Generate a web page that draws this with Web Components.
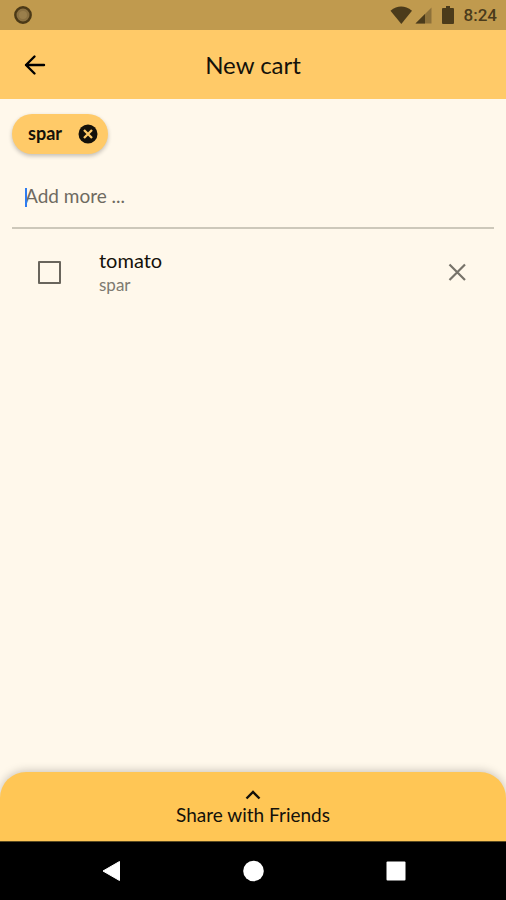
<!DOCTYPE html>
<html lang="en">
<head>
<meta charset="utf-8">
<meta name="viewport" content="width=device-width, initial-scale=1">
<title>New cart</title>
<style>
  body { margin: 0; background: #fff8eb; color: #14110a; font-family: Lato, "Open Sans", sans-serif; }
</style>
</head>
<body>
<cart-screen>
  <status-bar slot="top" time="8:24"></status-bar>
  <app-header slot="top">New cart</app-header>
  <store-chip>spar</store-chip>
  <add-field placeholder="Add more ..."></add-field>
  <cart-item name="tomato" store="spar"></cart-item>
  <share-sheet slot="bottom">Share with Friends</share-sheet>
  <nav-bar slot="bottom"></nav-bar>
</cart-screen>

<script>
function define(name, html) {
  const template = document.createElement('template');
  template.innerHTML = `<style>
    *, :host { box-sizing: border-box; }
    svg { display: block; }
    button { border: 0; padding: 0; margin: 0; background: none; color: inherit; font: inherit; cursor: pointer; }
  </style>` + html;
  customElements.define(name, class extends HTMLElement {
    constructor() {
      super();
      this.attachShadow({ mode: 'open' }).append(template.content.cloneNode(true));
    }
    connectedCallback() {
      this.shadowRoot.querySelectorAll('[data-text]').forEach(el => {
        el.textContent = this.getAttribute(el.dataset.text);
      });
      const input = this.shadowRoot.querySelector('input[type=text]');
      if (input) input.placeholder = this.getAttribute('placeholder');
    }
  });
}

define('cart-screen', `<style>
    :host { display: flex; flex-direction: column; min-height: 100vh; }
    main { flex: 1; padding: 15px 12px; }
  </style>
  <slot name="top"></slot>
  <main><slot></slot></main>
  <slot name="bottom"></slot>`);

define('status-bar', `<style>
    :host { display: flex; align-items: center; height: 30px; padding: 0 9px 0 13px; background: #c09a4e; color: #4b3b1b; font: 500 17px/20px Roboto, sans-serif; }
    .icons { margin-left: auto; margin-right: 8px; }
  </style>
  <svg width="20" height="20" viewBox="0 0 20 20"><circle cx="10" cy="10" r="7.7" fill="#8b7142" stroke="#4b3917" stroke-width="2.4"/><circle cx="10" cy="10" r="4" fill="#9a7f4c"/></svg>
  <svg class="icons" width="66" height="20" viewBox="0 0 66 20" fill="#4b3b1b">
    <path d="M0.5 5.7Q11 -2.5 22 5.7L11.3 19Z"/>
    <path d="M41.5 2.500V18.500H25.500Z" fill="#8d713a"/>
    <path d="M35 9V18.500H25.500Z"/>
    <path d="M56 1h4v2h3q1 0 1 1v14q0 1-1 1h-10q-1 0-1-1v-14q0-1 1-1h3z"/>
  </svg>
  <span data-text="time"></span>`);

define('app-header', `<style>
    :host { display: grid; grid-template-columns: 46px 1fr 46px; align-items: center; height: 69px; padding: 0 12px; background: #ffca68; }
    button { width: 46px; height: 46px; display: grid; place-items: center; }
    h1 { margin: 0; text-align: center; font-size: 24px; line-height: 32px; font-weight: 400; }
  </style>
  <button aria-label="Back"><svg width="22" height="22" viewBox="0 0 22 22" fill="none" stroke="#000" stroke-width="2.4" stroke-linecap="round" stroke-linejoin="round"><path d="M20 11H2M10.500 2.500L2 11l8.500 8.500"/></svg></button>
  <h1><slot></slot></h1>`);

define('store-chip', `<style>
    :host { display: inline-flex; align-items: center; gap: 16px; height: 40px; padding: 0 10px 0 16px; border-radius: 20px; background: #ffca68; box-shadow: 0 2px 4px #0000003d; font-size: 18px; line-height: 24px; font-weight: 700; vertical-align: top; }
    span { padding-bottom: 2px; }
  </style>
  <span><slot></slot></span>
  <button aria-label="Remove store"><svg width="20" height="20" viewBox="0 0 20 20"><circle cx="10" cy="10" r="9.500" fill="#14110a"/><path d="M6 6l8 8m0-8l-8 8" stroke="#ffca68" stroke-width="2.300"/></svg></button>`);

define('add-field', `<style>
    :host { display: block; position: relative; margin-top: 14px; border-bottom: 2px solid #cdc8ba; }
    input { display: block; width: 100%; height: 59px; padding: 0 13px 4px; border: 0; outline: 0; background: none; color: #14110a; font: inherit; font-size: 19px; }
    input::placeholder { color: #6e6a61; opacity: 1; }
    .caret { position: absolute; left: 13px; top: 20px; width: 2px; height: 19px; background: #2f7cf0; }
  </style>
  <input type="text" aria-label="Add more"><span class="caret"></span>`);

define('cart-item', `<style>
    :host { display: flex; align-items: center; padding: 18px 26px; }
    label { flex: 1; display: flex; align-items: center; gap: 38px; }
    input { appearance: none; margin: 0; width: 23px; height: 23px; border: 2px solid #69655c; border-radius: 1px; }
    input:checked { background: #69655c; }
    span { display: block; }
    .name { font-size: 20px; line-height: 26px; }
    .store { font-size: 17px; line-height: 24px; color: #7e7a70; }
  </style>
  <label><input type="checkbox"><span><span class="name" data-text="name"></span><span class="store" data-text="store"></span></span></label>
  <button aria-label="Remove item"><svg width="21" height="20" viewBox="0 0 21 20" fill="none" stroke="#77736a" stroke-width="2.2"><path d="M2.500 2.500l15.500 15.500m0-15.500L2.500 18"/></svg></button>`);

define('share-sheet', `<style>
    :host { display: block; border-radius: 26px 26px 0 0; background: #ffc655; box-shadow: 0 -1px 10px #00000038; }
    button { width: 100%; height: 69px; padding-top: 4px; display: flex; flex-direction: column; align-items: center; justify-content: center; gap: 2px; font-size: 19px; line-height: 24px; }
  </style>
  <button><svg width="16" height="11" viewBox="0 0 16 11" fill="none" stroke="#14110a" stroke-width="2.400"><path d="M1.500 8.500L8 2l6.500 6.500"/></svg><span><slot></slot></span></button>`);

define('nav-bar', `<style>
    :host { display: grid; grid-template-columns: repeat(3, 142px); justify-content: center; height: 59px; background: #000; border-top: 1px solid #594a20; }
    button { display: grid; place-items: center; }
  </style>
  <button aria-label="Back"><svg width="22" height="22" viewBox="0 0 22 22"><path d="M19.500 1.500V20.500L3 11Z" fill="#fff" stroke="#fff" stroke-linejoin="round"/></svg></button>
  <button aria-label="Home"><svg width="22" height="22" viewBox="0 0 22 22"><circle cx="11.5" cy="11" r="10.300" fill="#fff"/></svg></button>
  <button aria-label="Recent apps"><svg width="22" height="22" viewBox="0 0 22 22"><rect x="2.500" y="1.500" width="19" height="19" rx="1" fill="#fff"/></svg></button>`);
</script>
</body>
</html>
